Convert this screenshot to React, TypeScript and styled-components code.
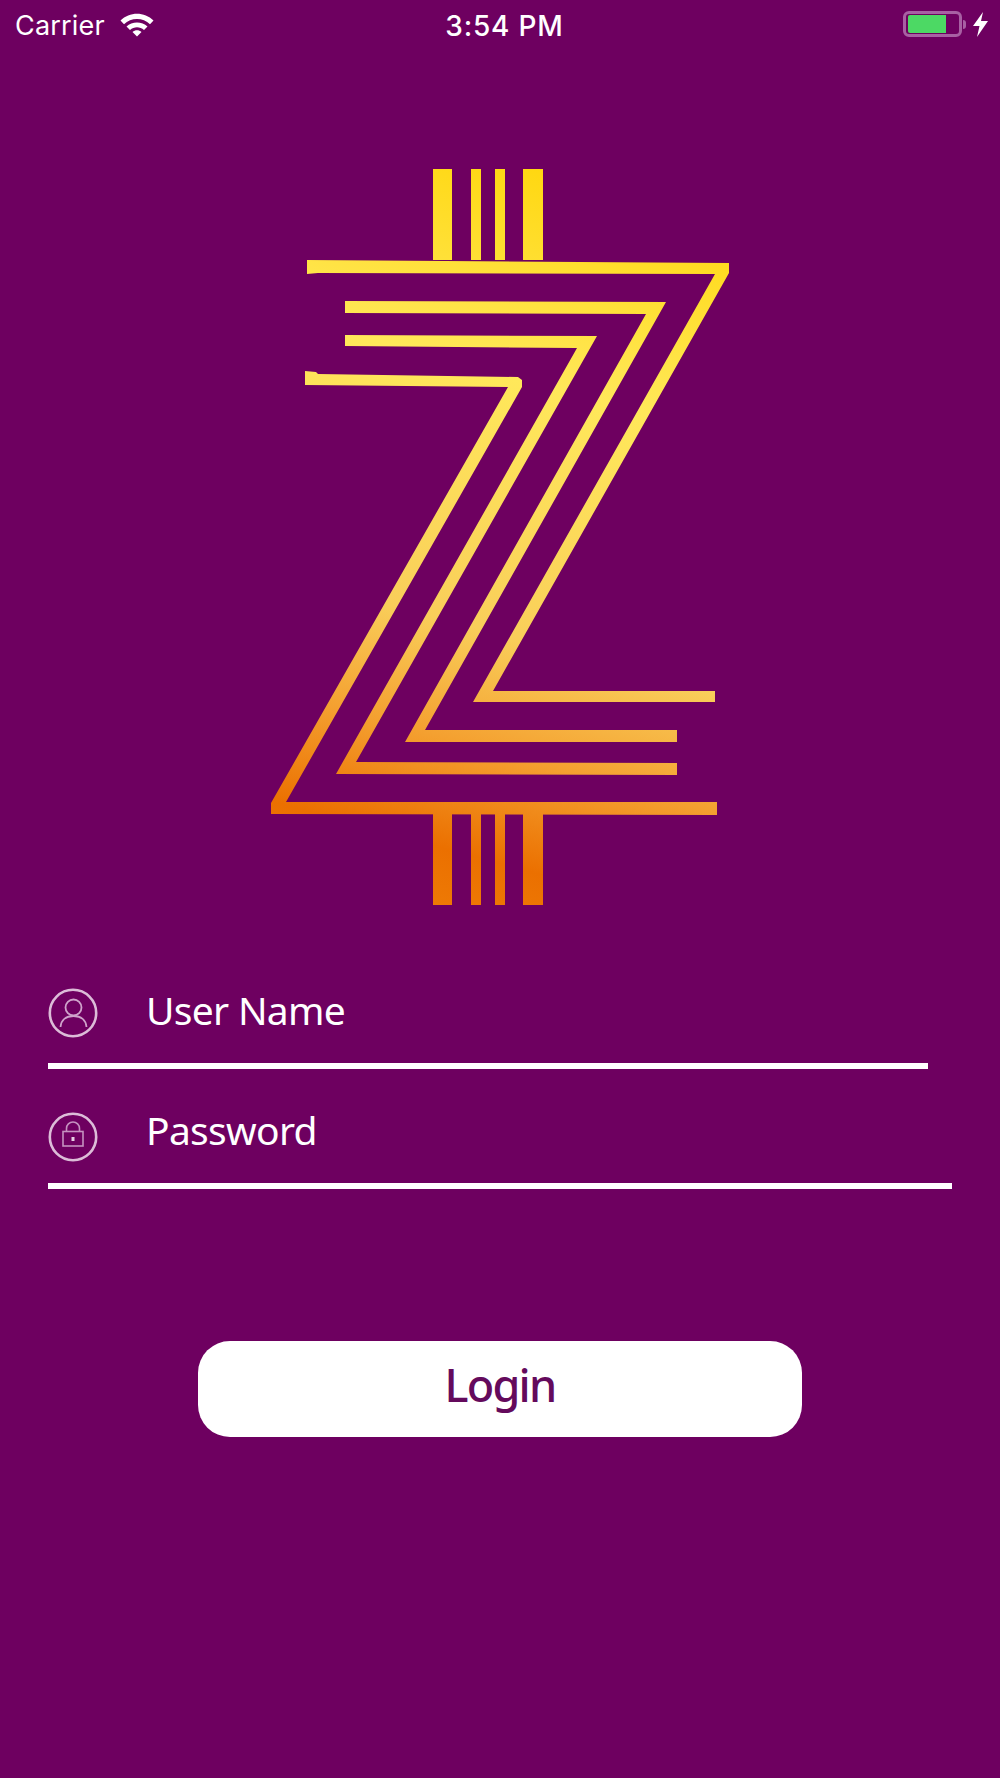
import styled, { createGlobalStyle } from "styled-components";

const GlobalStyle = createGlobalStyle`
  html, body {
    margin: 0;
    padding: 0;
    background-color: #6e0060;
  }
  * {
    box-sizing: border-box;
  }
`;

const BARS = [
  { x: 433, width: 19 },
  { x: 471, width: 10 },
  { x: 495, width: 10 },
  { x: 523, width: 20 },
];

function Logo() {
  return (
    <LogoImage viewBox="270 169 460 736">
      <defs>
        <linearGradient id="logoFill" gradientUnits="userSpaceOnUse" x1="620" y1="170" x2="420" y2="905">
          <stop offset="0" stopColor="#ffd60a" />
          <stop offset="0.3" stopColor="#ffe85a" />
          <stop offset="0.63" stopColor="#f9ce5a" />
          <stop offset="0.78" stopColor="#f4a030" />
          <stop offset="0.92" stopColor="#eb7000" />
          <stop offset="1" stopColor="#ee7a05" />
        </linearGradient>
      </defs>
      <g fill="url(#logoFill)">
        {BARS.map((bar) => (
          <g key={bar.x}>
            <rect x={bar.x} y="169" width={bar.width} height="91" />
            <rect x={bar.x} y="814" width={bar.width} height="91" />
          </g>
        ))}
        <polygon points="307,260 729,263 729,273 493,691 715,691 715,702 473,702 715,274 318,273 307,274" />
        <polygon points="345,301 666,302 425,730 677,730 677,742 405,742 646,314 345,313" />
        <polygon points="345,335 597,336 356,762 677,763 677,775 336,774 577,348 345,346" />
        <polygon points="305,371 316,372 318,374 518,377 522,380 522,387 286,802 717,802 717,815 271,814 271,803 508,387 305,385" />
      </g>
    </LogoImage>
  );
}

function UserIcon({ gap }: { gap: number }) {
  return (
    <FieldIcon viewBox="0 0 50 50" $gap={gap}>
      <circle cx="25" cy="25" r="23.2" strokeWidth="2.6" />
      <g stroke="#cfa3cb" strokeWidth="1.8">
        <circle cx="25.5" cy="19.5" r="8" />
        <path d="M12.5 39 C13 32 18 28 25.5 28 C33 28 38 32 38.5 39" />
      </g>
    </FieldIcon>
  );
}

function LockIcon({ gap }: { gap: number }) {
  return (
    <FieldIcon viewBox="0 0 50 50" $gap={gap}>
      <circle cx="25" cy="25" r="23.2" strokeWidth="2.6" />
      <g stroke="#c592c0" strokeWidth="1.6">
        <rect x="15" y="19.5" width="20" height="14.5" />
        <path d="M18.5 19.5 v-3 a6.5 6.5 0 0 1 13 0 v3" />
      </g>
      <rect x="23.5" y="25" width="3" height="4" fill="#e6cfe3" stroke="none" />
    </FieldIcon>
  );
}

export default function App() {
  return (
    <Screen>
      <GlobalStyle />
      <StatusBar>
        <StatusLeft>
          <span>Carrier</span>
          <svg width="34" height="24" viewBox="0 0 34 24" fill="#fff">
            <path d="M0.5 7.5 C9.5 -1.5 24.5 -1.5 33.5 7.5 L30 11.2 C23 4.2 11 4.2 4 11.2 Z" />
            <path d="M6.5 13.5 C12 8 22 8 27.5 13.5 L24 17 C20 13.2 14 13.2 10 17 Z" />
            <path d="M12.5 19 C15 16.6 19 16.6 21.5 19 L17 23.5 Z" />
          </svg>
        </StatusLeft>
        <StatusTime>3:54 PM</StatusTime>
        <StatusRight>
          <BatteryShell>
            <BatteryLevel />
          </BatteryShell>
          <BatteryNub />
          <svg width="15" height="25" viewBox="0 0 15 25" fill="#fff">
            <polygon points="10,0 0,14 6.5,14 4,25 15,9 8,9" />
          </svg>
        </StatusRight>
      </StatusBar>

      <LogoWrap>
        <Logo />
      </LogoWrap>

      <Form>
        <Field $lineWidth={880}>
          <UserIcon gap={25} />
          <FieldInput placeholder="User Name" />
        </Field>
        <Field $lineWidth={904}>
          <LockIcon gap={21} />
          <FieldInput placeholder="Password" type="password" />
        </Field>
      </Form>

      <LoginButton>Login</LoginButton>
    </Screen>
  );
}

const Screen = styled.div`
  min-height: 1778px;
  background-color: #6e0060;
  display: flex;
  flex-direction: column;
  font-family: "Noto Sans", sans-serif;
`;

const StatusBar = styled.div`
  height: 46px;
  padding: 11px 12px 0 15px;
  display: grid;
  grid-template-columns: 1fr auto 1fr;
  align-items: start;
  color: #fff;
  font-family: Inter, "Liberation Sans", sans-serif;
  font-size: 27px;
  line-height: 28px;
`;

const StatusLeft = styled.div`
  display: flex;
  align-items: flex-start;
  gap: 15px;
  padding-top: 1px;
  letter-spacing: 0.2px;
  svg {
    margin-top: 1px;
  }
`;

const StatusTime = styled.div`
  margin: 1px 0 0 6px;
  font-size: 28px;
  font-weight: 500;
  letter-spacing: 0.8px;
`;

const StatusRight = styled.div`
  display: flex;
  justify-content: flex-end;
  align-items: center;
  height: 26px;
  svg {
    margin-left: 7px;
  }
`;

const BatteryShell = styled.div`
  width: 59px;
  height: 26px;
  padding: 1px 2px;
  border: 3px solid #a860a3;
  border-radius: 6px;
`;

const BatteryLevel = styled.div`
  width: 38px;
  height: 18px;
  background-color: #4cd964;
  border-radius: 2px 0 0 2px;
`;

const BatteryNub = styled.div`
  width: 3px;
  height: 9px;
  margin-left: 1px;
  background-color: #a860a3;
  border-radius: 0 4px 4px 0;
`;

const LogoWrap = styled.div`
  display: flex;
  justify-content: center;
  padding-top: 123px;
`;

const LogoImage = styled.svg`
  display: block;
  width: 460px;
  height: 736px;
  filter: blur(0.7px);
`;

const Form = styled.div`
  margin: 57px 0 0 48px;
  display: flex;
  flex-direction: column;
  gap: 13px;
`;

const Field = styled.label<{ $lineWidth: number }>`
  width: ${(p) => p.$lineWidth}px;
  height: 107px;
  display: flex;
  align-items: flex-end;
  border-bottom: 6px solid #fff;
`;

const FieldIcon = styled.svg<{ $gap: number }>`
  width: 50px;
  height: 50px;
  margin-bottom: ${(p) => p.$gap}px;
  flex-shrink: 0;
  fill: none;
  stroke: #dcbcd8;
  filter: blur(0.3px);
`;

const FieldInput = styled.input`
  flex: 1;
  min-width: 0;
  height: 50px;
  margin: 0 0 28px 48px;
  padding: 0;
  border: 0;
  outline: 0;
  background: transparent;
  color: #fff;
  font-family: "Noto Sans", sans-serif;
  font-size: 39px;
  line-height: 50px;
  letter-spacing: -0.7px;
  &::placeholder {
    color: #fff;
    opacity: 1;
  }
`;

const LoginButton = styled.button`
  align-self: center;
  width: 604px;
  height: 96px;
  margin-top: 152px;
  padding: 0 0 8px;
  border: 0;
  border-radius: 32px;
  background-color: #fff;
  color: #640a5c;
  font-family: "Noto Sans", sans-serif;
  font-size: 45px;
  font-weight: 500;
  line-height: 88px;
  letter-spacing: -1.8px;
`;
